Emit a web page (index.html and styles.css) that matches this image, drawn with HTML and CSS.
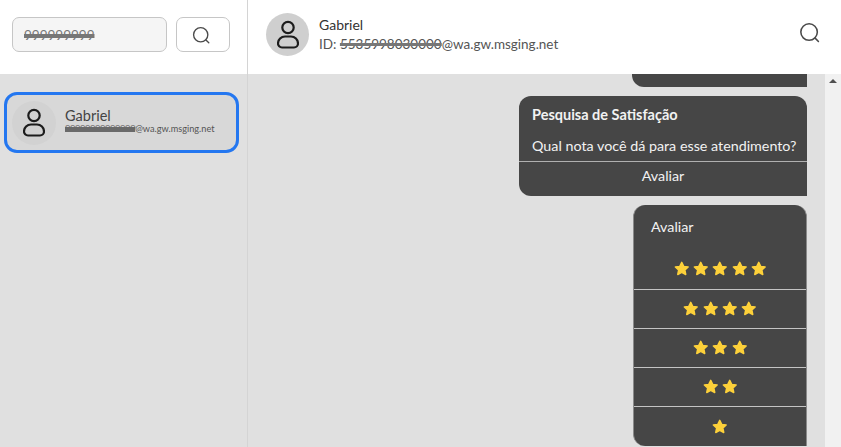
FILE: index.html
```html
<!DOCTYPE html>
<html lang="en">

<head>
    <meta charset="UTF-8">
    <title>Atendimento</title>
    <link rel="stylesheet" href="styles.css">
</head>

<body>
    <svg class="defs" width="0" height="0">
        <symbol id="star" viewBox="0 0 24 24">
            <path d="M12 3.2l2.7 5.6 6.1.8-4.5 4.2 1.2 6.1-5.5-3-5.5 3 1.2-6.1-4.5-4.2 6.1-.8z" fill="#fdd13a" stroke="#fdd13a" stroke-width="2" stroke-linejoin="round" />
        </symbol>
        <symbol id="search" viewBox="0 0 24 24">
            <circle cx="11" cy="11" r="9" fill="none" stroke="currentColor" stroke-width="1.7" />
            <path d="M17.6 17.6l3.6 3.6" fill="none" stroke="currentColor" stroke-width="1.7" stroke-linecap="round" />
        </symbol>
        <symbol id="user" viewBox="0 0 22 29">
            <circle cx="11" cy="7.5" r="5.7" fill="none" stroke="currentColor" stroke-width="2.2" />
            <path d="M8 16.5h6a7 7 0 0 1 7 7v0a4 4 0 0 1-4 4H5a4 4 0 0 1-4-4v0a7 7 0 0 1 7-7z" fill="none" stroke="currentColor" stroke-width="2.2" />
        </symbol>
    </svg>

    <aside class="sidebar">
        <div class="search-bar">
            <div class="search-input"><span class="redacted">999999999</span></div>
            <button class="search-button"><svg class="icon-search"><use href="#search" /></svg></button>
        </div>
        <div class="contact-list">
            <div class="contact-card">
                <div class="avatar avatar-card"><svg class="icon-user"><use href="#user" /></svg></div>
                <div class="contact-info">
                    <div class="contact-name">Gabriel</div>
                    <div class="contact-id"><span class="redacted-dots">99999999999999</span>@wa.gw.msging.net</div>
                </div>
            </div>
        </div>
    </aside>

    <main class="chat">
        <header class="chat-header">
            <div class="avatar"><svg class="icon-user"><use href="#user" /></svg></div>
            <div class="chat-user">
                <div class="chat-name">Gabriel</div>
                <div class="chat-id">ID: <span class="redacted">5535998030000</span>@wa.gw.msging.net</div>
            </div>
            <svg class="icon-header-search"><use href="#search" /></svg>
        </header>

        <div class="chat-body">
            <div class="messages">
                <div class="bubble bubble-clipped"></div>

                <div class="bubble bubble-survey">
                    <div class="survey-title">Pesquisa de Satisfação</div>
                    <div class="survey-text">Qual nota você dá para esse atendimento?</div>
                    <div class="survey-action">Avaliar</div>
                </div>

                <div class="bubble bubble-rating">
                    <div class="rating-title">Avaliar</div>
                    <div class="rating-row rating-first">
                        <svg class="star"><use href="#star" /></svg>
                        <svg class="star"><use href="#star" /></svg>
                        <svg class="star"><use href="#star" /></svg>
                        <svg class="star"><use href="#star" /></svg>
                        <svg class="star"><use href="#star" /></svg>
                    </div>
                    <div class="rating-row">
                        <svg class="star"><use href="#star" /></svg>
                        <svg class="star"><use href="#star" /></svg>
                        <svg class="star"><use href="#star" /></svg>
                        <svg class="star"><use href="#star" /></svg>
                    </div>
                    <div class="rating-row">
                        <svg class="star"><use href="#star" /></svg>
                        <svg class="star"><use href="#star" /></svg>
                        <svg class="star"><use href="#star" /></svg>
                    </div>
                    <div class="rating-row">
                        <svg class="star"><use href="#star" /></svg>
                        <svg class="star"><use href="#star" /></svg>
                    </div>
                    <div class="rating-row">
                        <svg class="star"><use href="#star" /></svg>
                    </div>
                </div>
            </div>

            <div class="scrollbar">
                <div class="scroll-arrow"></div>
            </div>
        </div>
    </main>
</body>

</html>
```

FILE: styles.css
```css
html, body {
    height: 100%;
}

body {
    display: flex;
    margin: 0;
    overflow: hidden;
    background-color: #e0e0e0;
    color: #333;
    font-family: Lato, "Noto Sans", Arial, sans-serif;
}

.defs {
    position: absolute;
}

/* Sidebar */
.sidebar {
    width: 247px;
    flex-shrink: 0;
    border-right: 1px solid #d4d4d4;
}

.search-bar {
    display: flex;
    gap: 9px;
    height: 74px;
    box-sizing: border-box;
    padding: 17px 17px 0 12px;
    background-color: white;
}

.search-input {
    display: flex;
    align-items: center;
    width: 155px;
    height: 35px;
    box-sizing: border-box;
    padding-left: 11px;
    border: 1px solid #c6c6c6;
    border-radius: 7px;
    background-color: #f5f5f5;
    font-size: 13.5px;
    color: #777;
}

.search-input .redacted {
    text-decoration-thickness: 4px;
}

.search-button {
    display: flex;
    align-items: center;
    justify-content: center;
    width: 54px;
    height: 35px;
    padding: 2px 3px 0 0;
    border: 1px solid #c6c6c6;
    border-radius: 7px;
    background-color: white;
    color: #4a4a4a;
}

.icon-search {
    width: 19px;
    height: 19px;
}

.redacted {
    text-decoration: line-through;
    text-decoration-thickness: 3px;
    text-decoration-color: #777;
}

.contact-list {
    padding: 18px 8px 0 4px;
}

.contact-card {
    display: flex;
    align-items: center;
    gap: 9px;
    height: 61px;
    box-sizing: border-box;
    padding-left: 5px;
    border: 3px solid #2477f0;
    border-radius: 13px;
    background-color: #d8d8d8;
}

.avatar {
    display: flex;
    align-items: center;
    justify-content: center;
    width: 43px;
    height: 43px;
    flex-shrink: 0;
    border-radius: 50%;
    background-color: #cfcfcf;
    color: #1c1c1c;
}

.avatar-card {
    width: 44px;
    height: 44px;
    background-color: #d2d2d2;
}

.icon-user {
    width: 22px;
    height: 29px;
}

.contact-info {
    padding-bottom: 3px;
}

.contact-name {
    font-size: 14.5px;
    line-height: 16px;
    color: #444;
}

.contact-id {
    display: flex;
    font-size: 9.2px;
    line-height: 10px;
    color: #555;
}

.redacted-dots {
    font-size: 9.5px;
    letter-spacing: -0.5px;
    color: #6a6a6a;
    text-decoration: line-through;
    text-decoration-thickness: 5px;
    text-decoration-color: #6a6a6a;
}

/* Chat */
.chat {
    display: flex;
    flex-direction: column;
    flex: 1;
    min-width: 0;
}

.chat-header {
    display: flex;
    align-items: center;
    gap: 10px;
    height: 74px;
    flex-shrink: 0;
    box-sizing: border-box;
    padding: 0 20px 5px 18px;
    background-color: white;
}

.chat-user {
    flex: 1;
}

.chat-name {
    font-size: 14px;
    line-height: 19px;
    color: #333;
}

.chat-id {
    font-size: 13.5px;
    line-height: 20px;
    color: #555;
}

.icon-header-search {
    width: 22px;
    height: 22px;
    margin-bottom: 3px;
    color: #4a4a4a;
}

.chat-body {
    display: flex;
    flex: 1;
    min-height: 0;
}

.messages {
    display: flex;
    flex-direction: column;
    align-items: flex-end;
    gap: 9px;
    flex: 1;
    padding-right: 18px;
    overflow: hidden;
}

.bubble {
    flex-shrink: 0;
    box-sizing: border-box;
    background-color: #464646;
    color: #f2f2f2;
    font-size: 14px;
}

.bubble-clipped {
    width: 175px;
    height: 13px;
    border-radius: 0 0 0 12px;
}

.bubble-survey {
    width: 288px;
    height: 100px;
    border-radius: 12px 12px 0 12px;
}

.survey-title {
    padding: 10px 0 0 13px;
    line-height: 18px;
    font-size: 14.5px;
    font-weight: 700;
}

.survey-text {
    padding: 13px 0 0 13px;
    line-height: 18px;
    height: 24px;
    font-size: 14.3px;
    border-bottom: 1px solid #b0b0b0;
}

.survey-action {
    text-align: center;
    line-height: 28px;
    font-size: 14.3px;
}

.bubble-rating {
    width: 174px;
    height: 241px;
    border-radius: 12px 12px 0 12px;
    border-left: 1px solid #8a8a8a;
    border-right: 1px solid #8a8a8a;
}

.rating-title {
    padding: 13px 0 0 17px;
    line-height: 18px;
    height: 31.5px;
    font-size: 14.3px;
}

.rating-row {
    display: flex;
    align-items: center;
    justify-content: center;
    gap: 1.8px;
    height: 39.2px;
    border-top: 1px solid #c4c4c4;
    box-sizing: border-box;
}

.rating-first {
    border-top: none;
}

.star {
    width: 17.5px;
    height: 17.5px;
}

/* Scrollbar */
.scrollbar {
    width: 16px;
    flex-shrink: 0;
    background-color: #f1f1f1;
}

.scroll-arrow {
    width: 0;
    height: 0;
    margin: 5px auto 0;
    border-left: 4px solid transparent;
    border-right: 4px solid transparent;
    border-bottom: 4px solid #505050;
}
```
